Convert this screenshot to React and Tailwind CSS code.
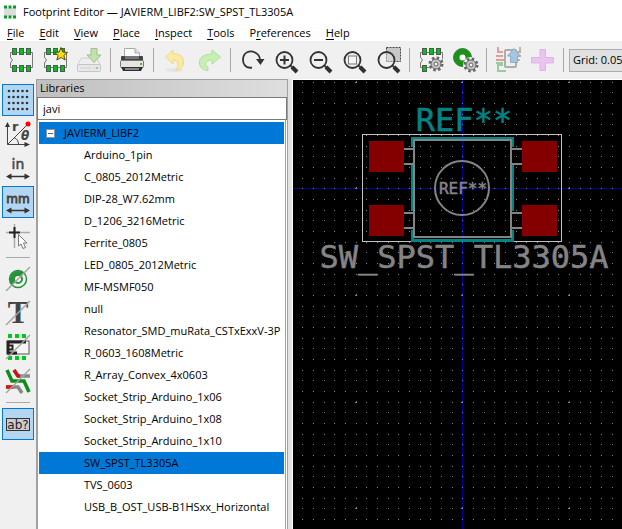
import React from "react";

const Chip = ({ pins = [0, 1, 2, 3, 4, 5] }) => (
  <g>
    <path d="M1.5 4.5H23.5V19.5H1.5V15L3.5 12L1.5 9.5Z" fill="#f2f2f2" stroke="#777" />
    {pins.map((p) => (
      <rect key={p} x={3.5 + (p % 3) * 7} y={p < 3 ? 0.5 : 17.5} width="4" height="6" fill="#00c020" stroke="#4c5b4c" />
    ))}
  </g>
);

const Gear = ({ x, y }) => (
  <g transform={`translate(${x} ${y})`}>
    <circle r="8" fill="#f0f0f0" />
    <circle r="6" fill="none" stroke="#666" strokeWidth="3" strokeDasharray="2.4 2.31" />
    <circle r="5" fill="#c4c4c4" stroke="#666" />
    <circle r="2" fill="#f4f4f4" stroke="#666" />
  </g>
);

const Lens = ({ children }) => (
  <g>
    <path d="M16 17L19 20" stroke="#444" strokeWidth="2" />
    <path d="M18 19L23 24" stroke="#303030" strokeWidth="4" />
    <circle cx="10.500" cy="12" r="8" fill="#f0f0f0" fillOpacity="0.4" stroke="#333" strokeWidth="1.800" />
    {children}
  </g>
);

const Arrows = () => (
  <g>
    <path d="M2 20.500H22" stroke="#333" strokeWidth="1.500" fill="none" />
    <path d="M0 20.500L5.500 17.500V23.500ZM24 20.500L18.500 17.500V23.500Z" fill="#333" />
  </g>
);

const Slash = () => <path d="M0 24L24 0" stroke="#a3a3a3" strokeWidth="1.5" />;

const art = {
  newFootprint: <Chip />,
  wizard: (
    <g>
      <Chip />
      <path d="M18 -0.500L19.800 4L24.500 4.400L20.800 7.500L22.200 12L18 9.500L13.800 12L15.200 7.500L11.500 4.400L16.200 4Z" fill="#f6de15" stroke="#554c00" />
    </g>
  ),
  save: (
    <g opacity="0.6">
      <path d="M4.500 10H19.500L23.500 17H0.500Z" fill="#eee" stroke="#bbb" />
      <rect x="0.500" y="16.500" width="23" height="7" rx="1" fill="#e4e4e4" stroke="#aaa" />
      <path d="M3 20H14M16 20H18" stroke="#bbb" />
      <path d="M19 20H21" stroke="#4c4" strokeWidth="2" />
      <path d="M14 0.500H20V7H24L17 14.500L10 7H14Z" fill="#a4dc78" stroke="#6b9c58" />
    </g>
  ),
  print: (
    <g>
      <path d="M4.500 11V0.500H15L19.500 5V11" fill="#fbfbfb" stroke="#aaa" />
      <path d="M15 0.500V5H19.500" fill="#ddd" stroke="#aaa" />
      <rect x="1" y="8" width="22" height="6" rx="1" fill="#434343" />
      <rect x="5" y="8" width="14" height="3" fill="#777" />
      <rect x="0.500" y="12.500" width="23" height="7" rx="1" fill="#e4e4e4" stroke="#777" />
      <path d="M20 16H22" stroke="#39c321" strokeWidth="2" />
      <path d="M1 19H23L21 23H3Z" fill="#303030" />
      <path d="M5 21H19" stroke="#ddd" />
    </g>
  ),
  undo: (
    <g>
      <ellipse cx="11" cy="22" rx="9" ry="2" fill="#e6e6e6" />
      <path d="M2.500 9L10 2V6C17 5.500 21 9 20.500 15C20 19 17 22 12 22.500C16 19 16.500 12 10 12V16Z" fill="#fbeaa0" stroke="#ecd78a" />
    </g>
  ),
  redo: (
    <path d="M23.500 9L15 2V6C6 6 1.500 10 2.500 16C3.500 20 6 22 11 22.500V19C7 18 8 12 15 12V16Z" fill="#c8efb2" stroke="#b0dfa0" />
  ),
  rotate: (
    <g>
      <path d="M12 19.500C5 21 3 15 3 12C3 4 10 2 15 4.500C19 6.500 20 9 20 12" fill="none" stroke="#333" strokeWidth="1.800" />
      <path d="M16 11H24.500L20.500 17Z" fill="#333" />
    </g>
  ),
  zoomIn: <Lens><path d="M6 12H15M10.500 7.500V16.500" stroke="#333" strokeWidth="2" /></Lens>,
  zoomOut: <Lens><path d="M6 12H15" stroke="#333" strokeWidth="2" /></Lens>,
  zoomFit: <Lens><rect x="6.500" y="8" width="8" height="8" fill="#f6f6f6" stroke="#777" /></Lens>,
  zoomArea: (
    <g>
      <rect x="10.500" y="-0.500" width="14" height="14" fill="#c7c7c7" stroke="#444" strokeDasharray="2 1" />
      <Lens />
    </g>
  ),
  footprintProps: <g><Chip pins={[0, 1, 2, 3]} /><Gear x={17} y={16} /></g>,
  padProps: (
    <g>
      <circle cx="9.500" cy="9.500" r="6" fill="#fff" stroke="#189318" strokeWidth="6" />
      <circle cx="9.500" cy="9.500" r="9" fill="none" stroke="#3f7c3f" strokeWidth="1" />
      <Gear x={18} y={17} />
    </g>
  ),
  loadBoard: (
    <g fill="none" strokeWidth="2" opacity="0.55">
      <path d="M2 -1V4H7M0 8H7M0 12H8M25 4H20M25 8H19" stroke="#dc5c50" />
      <path d="M24 -1V3M0 15H7M24 12H18M10 23H2V17H7" stroke="#4db060" />
      <rect x="9" y="2" width="11" height="17" rx="1" stroke="#777" />
      <path d="M18 0.500L24.500 8H21.500V14.500H14.500V8H11.500Z" fill="#68a2df" stroke="#4673a0" strokeWidth="1" />
    </g>
  ),
  add: <path d="M10 1.500H15.500V9.500H23.500V15H15.500V22.500H10V15H1.500V9.500H10Z" fill="#e9c5ef" stroke="#e0b2e8" />,
  grid: (
    <g fill="#333">
      {Array.from({ length: 20 }, (_, i) => (
        <circle key={i} cx={3 + (i % 5) * 4.5} cy={3 + Math.floor(i / 5) * 6} r="1.300" />
      ))}
    </g>
  ),
  polar: (
    <g>
      <path d="M1.500 22.500V3M1.500 22.500H20M1.500 22.500L21 3M8 15.500C11 17 12.500 19 12.500 22.500" fill="none" stroke="#444" />
      <path d="M1.500 0L-1 5H4ZM24 22.500L18.500 20V25Z" fill="#333" />
      <circle cx="22" cy="2" r="2.500" fill="#f00" />
      <text x="6" y="9" className="font-['DejaVu_Sans'] text-[13px] font-bold" fill="#444">r</text>
      <text x="15" y="18" className="font-['DejaVu_Sans'] text-[12px] font-bold italic" fill="#444">θ</text>
    </g>
  ),
  inch: (
    <g>
      <text x="12" y="13" textAnchor="middle" className="font-['DejaVu_Sans'] text-[14px]" fill="#444" stroke="#444" strokeWidth="0.500">in</text>
      <Arrows />
    </g>
  ),
  mm: (
    <g>
      <text x="12" y="13" textAnchor="middle" className="font-['DejaVu_Sans'] text-[12px]" fill="#444" stroke="#444" strokeWidth="0.800">mm</text>
      <Arrows />
    </g>
  ),
  cursor: (
    <g fill="none">
      <path d="M0 8.500H24M8.500 0V24" stroke="#aaa" strokeWidth="1.500" />
      <path d="M3 8.500H14M8.500 3V14" stroke="#222" strokeWidth="2" />
      <path d="M12.500 10.500V22L15 20L17 24.500L19.500 23.500L17.500 19H21Z" fill="#fff" stroke="#777" />
    </g>
  ),
  pad: (
    <g>
      <circle cx="12" cy="12" r="8.500" fill="#f6f6f6" stroke="#279237" strokeWidth="1.500" />
      <path d="M18 6A8.500 8.500 0 0 0 6 18Z" fill="#279237" />
      <circle cx="12" cy="12" r="4" fill="#f5f5f5" stroke="#279237" strokeWidth="2" />
      <Slash />
    </g>
  ),
  text: (
    <g>
      <text x="12" y="22" textAnchor="middle" className="font-['Liberation_Serif',serif] text-[31px] font-bold" fill="#444">T</text>
      <Slash />
    </g>
  ),
  edges: (
    <g>
      <path d="M2 1H20M2 23H20" stroke="#00c818" strokeWidth="4" strokeDasharray="4 3" />
      <rect x="2" y="6" width="21" height="13" fill="#f5f5f5" stroke="#555" />
      <path d="M20 7H2V18H11" fill="none" stroke="#222" strokeWidth="3" />
      <path d="M3 10.500H6.500V14.500H3" fill="none" stroke="#222" strokeWidth="2" />
      <Slash />
    </g>
  ),
  tracks: (
    <g fill="none" strokeWidth="3.500">
      <path d="M8 1L12 7H24" stroke="#888" />
      <path d="M8 1L12 7H14" stroke="#d01414" />
      <path d="M1 1L6 12H18L23 23" stroke="#108c1a" />
      <path d="M0 18H12L16 24" stroke="#888" />
      <path d="M0 18H7" stroke="#d01414" />
      <Slash />
    </g>
  ),
  contrast: (
    <g>
      <rect x="0.500" y="6.500" width="23" height="12" fill="#ccc" stroke="#333" />
      <text x="12" y="17" textAnchor="middle" className="font-['DejaVu_Sans'] text-[12px]" fill="#222">ab?</text>
    </g>
  ),
};

const topTools = [
  ["newFootprint", "New footprint"], ["wizard", "Footprint wizard"], ["save", "Save"], null,
  ["print", "Print"], null, ["undo", "Undo"], ["redo", "Redo"], null,
  ["rotate", "Refresh"], ["zoomIn", "Zoom in"], ["zoomOut", "Zoom out"], ["zoomFit", "Zoom to fit"], ["zoomArea", "Zoom to selection"], null,
  ["footprintProps", "Footprint properties"], ["padProps", "Default pad properties"], null,
  ["loadBoard", "Load from board"], ["add", "Insert into board"], null,
];

const sideTools = [
  ["grid", "Show grid", true], ["polar", "Polar coordinates"], ["inch", "Inches"], ["mm", "Millimeters", true], ["cursor", "Full-window crosshairs"], null,
  ["pad", "Sketch pads"], ["text", "Sketch text"], ["edges", "Sketch edges"], ["tracks", "Sketch tracks"], null,
  ["contrast", "High contrast", true],
];

const menus = [["", "F", "ile"], ["", "E", "dit"], ["", "V", "iew"], ["", "P", "lace"], ["", "I", "nspect"], ["", "T", "ools"], ["P", "r", "eferences"], ["", "H", "elp"]];

const footprints = [
  "Arduino_1pin", "C_0805_2012Metric", "DIP-28_W7.62mm", "D_1206_3216Metric", "Ferrite_0805",
  "LED_0805_2012Metric", "MF-MSMF050", "null", "Resonator_SMD_muRata_CSTxExxV-3P", "R_0603_1608Metric",
  "R_Array_Convex_4x0603", "Socket_Strip_Arduino_1x06", "Socket_Strip_Arduino_1x08", "Socket_Strip_Arduino_1x10",
  "SW_SPST_TL3305A", "TVS_0603", "USB_B_OST_USB-B1HSxx_Horizontal",
];

function Tool({ icon, label, active }) {
  return (
    <button
      aria-label={label}
      className={`flex size-8 shrink-0 items-center justify-center border ${active ? "border-[#0078d7] bg-[#b3d7f3]" : "border-transparent"}`}
    >
      <svg viewBox="0 0 24 24" className="size-6 overflow-visible">{art[icon]}</svg>
    </button>
  );
}

const ORIGIN = { x: 169, y: 108 };
const PITCH = 32 / 3;

// Rounds up to the next device pixel, ignoring floating-point noise.
const snap = (v) => Math.ceil(v - 0.01);

function Canvas() {
  const dots = [];
  for (let i = -15; i <= 110; i++) {
    for (let j = -10; j <= 90; j++) {
      const x = snap(ORIGIN.x + i * PITCH);
      const y = snap(ORIGIN.y + j * PITCH);
      dots.push(`M${x} ${y}h1v1h-1z`);
      if (i % 10 === 0 && j % 10 === 0) dots.push(`M${x} ${y - 1}h1v1h-1zM${x - 1} ${y}h1v1h-1z`);
    }
  }
  return (
    <svg className="h-full w-full bg-black" role="img" aria-label="Footprint canvas">
      <path d="M169.500 0V4000M0 108.500H4000" stroke="#000098" shapeRendering="crispEdges" />
      <path d={dots.join("")} fill="#848484" shapeRendering="crispEdges" />
      <g fill="#840000">
        <rect x="76" y="61" width="35" height="31" />
        <rect x="76" y="125" width="35" height="31" />
        <rect x="229" y="61" width="35" height="31" />
        <rect x="229" y="125" width="35" height="31" />
      </g>
      <rect x="69.500" y="54.500" width="199" height="107" fill="none" stroke="#c2c2c2" />
      <path
        d="M119.500 67V58H219.500V67M119.500 85V131M219.500 85V131M119.500 150V160H219.500V150"
        fill="none" stroke="#008484" strokeWidth="3" shapeRendering="crispEdges"
      />
      <g fill="none" stroke="#848484" strokeWidth="2">
        <rect x="121" y="60" width="97" height="97" />
        <path d="M111 69H121M111 84H121M111 133H121M111 148H121M218 69H229M218 84H229M218 133H229M218 148H229" />
        <circle cx="169" cy="108" r="27" />
      </g>
      <g className="font-['DejaVu_Sans_Mono',monospace]" textAnchor="middle" strokeWidth="0.500">
        <text x="171" y="51" className="text-[32px]" fill="#008484" stroke="#008484">REF**</text>
        <text x="170" y="114" className="text-[16px]" fill="#848484" stroke="#848484">REF**</text>
        <text x="171" y="188" className="text-[32px]" fill="#848484" stroke="#848484">SW_SPST_TL3305A</text>
      </g>
    </svg>
  );
}

export default function App() {
  return (
    <div className="flex h-screen flex-col overflow-hidden bg-[#f0f0f0] font-['Open_Sans','Noto_Sans',sans-serif] text-[11px] text-black">
      <header className="bg-white">
        <div className="flex h-6 items-center gap-[6px] pl-[3px]">
          <svg viewBox="0 0 14 14" className="size-[14px]">
            <rect x="1" y="3" width="12" height="8" fill="#ddd" />
            <path d="M1 2H13M1 12H13" stroke="#0a9c2a" strokeWidth="3" strokeDasharray="3 1.500" />
          </svg>
          <h1>Footprint Editor — JAVIERM_LIBF2:SW_SPST_TL3305A</h1>
        </div>
        <nav className="flex h-[17px] items-center gap-[15px] pl-[7px]">
          {menus.map(([a, key, b]) => (
            <button key={key + b} className="leading-4">{a}<u className="underline-offset-2">{key}</u>{b}</button>
          ))}
        </nav>
      </header>

      <div className="flex h-[38px] shrink-0 items-center gap-[2px] overflow-hidden pl-[5px]">
        {topTools.map((t, i) =>
          t ? <Tool key={i} icon={t[0]} label={t[1]} /> : (
            <div key={i} className="flex w-[7px] shrink-0 justify-center"><div className="h-6 w-px bg-[#a8a8a8]" /></div>
          )
        )}
        <select aria-label="Grid" className="h-[23px] w-48 shrink-0 appearance-none border border-[#adadad] bg-[#e1e1e1] px-[3px]">
          <option>Grid: 0.0500 mm (1.97 mils)</option>
        </select>
      </div>

      <main className="flex min-h-0 flex-1">
        <div className="flex w-9 shrink-0 flex-col items-center gap-[2px] pt-[5px]">
          {sideTools.map((t, i) =>
            t ? <Tool key={i} icon={t[0]} label={t[1]} active={t[2]} /> : (
              <div key={i} className="flex h-[7px] shrink-0 items-center"><div className="h-px w-6 bg-[#a8a8a8]" /></div>
            )
          )}
        </div>

        <section className="flex w-[252px] shrink-0 flex-col border-x border-t border-[#a0a0a0] bg-white">
          <label htmlFor="filter" className="h-[17px] bg-linear-to-r from-[#bfbfbf] to-[#dedede] pl-[3px] text-[11px] leading-4">Libraries</label>
          <input id="filter" defaultValue="javi" className="h-[23px] border border-[#7a7a7a] bg-white px-[5px] outline-none" />
          <div className="mr-px min-h-0 flex-1 overflow-hidden border-x border-[#a0a0a0] px-px pt-[2px]">
            <ul role="tree" aria-label="Footprint libraries" className="leading-[22px]">
              <li role="treeitem" aria-expanded="true" aria-selected="true">
                <div className="flex items-center bg-[#0078d7] pl-[7px]">
                  <span className="flex size-[9px] items-center justify-center border border-[#919191] bg-white"><span className="h-px w-[5px] bg-[#4b63a7]" /></span>
                  <span className="pl-[9px]">JAVIERM_LIBF2</span>
                </div>
                <ul role="group">
                  {footprints.map((f) => (
                    <li key={f} role="treeitem" aria-selected={f === "SW_SPST_TL3305A"} className={`overflow-hidden pl-[45px] whitespace-nowrap ${f === "SW_SPST_TL3305A" ? "bg-[#0078d7]" : ""}`}>{f}</li>
                  ))}
                </ul>
              </li>
            </ul>
          </div>
        </section>

        <div className="w-1 shrink-0 bg-[#e3e3e3]" />
        <div className="min-w-0 flex-1 border-t border-l border-white"><Canvas /></div>
      </main>
    </div>
  );
}
